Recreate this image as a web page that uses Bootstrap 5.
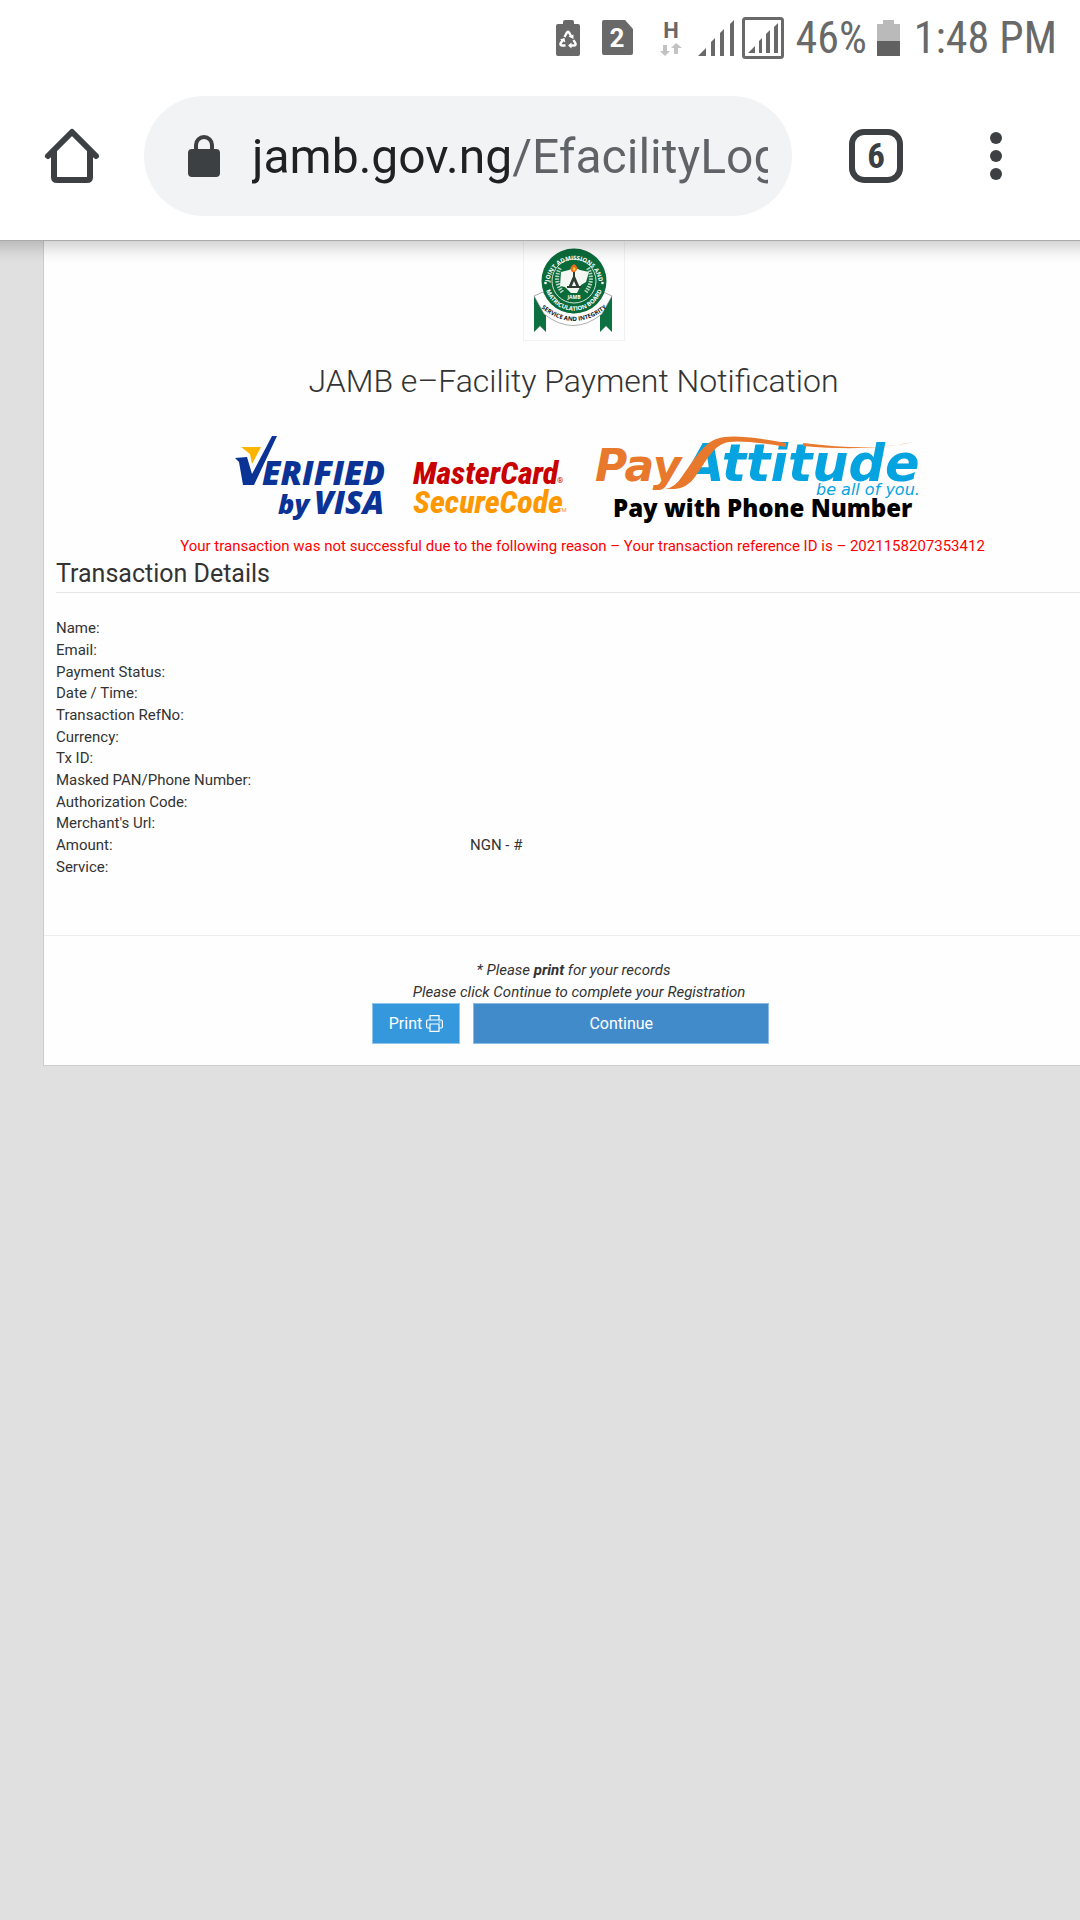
<!DOCTYPE html>
<html lang="en">
<head>
<meta charset="utf-8">
<meta name="viewport" content="width=device-width, initial-scale=1">
<title>JAMB e-Facility Payment Notification</title>
<link href="https://cdn.jsdelivr.net/npm/bootstrap@5.3.0/dist/css/bootstrap.min.css" rel="stylesheet">
<style>
body { font-family: Roboto, "Liberation Sans", sans-serif; background: #e0e0e0; color: #333; font-size: 15px; line-height: 21px; overflow-x: hidden; }
svg { display: block; flex: none; overflow: visible; }
.phone-status { height: 76px; padding-right: 23px; color: #696969; font-family: "Roboto Condensed", Roboto, sans-serif; font-size: 44px; line-height: 76px; }
.sim-gap { margin: 0 27px 0 22px; }
.level-gap { margin: 0 14px 0 10px; }
.toolbar { padding: 20px 78px 24px 45px; border-bottom: 1px solid #aaacac; }
.toolbar .btn { --bs-btn-padding-x: 0; --bs-btn-padding-y: 0; --bs-btn-border-width: 0; color: #3c4043; flex: none; }
.toolbar .menu-btn { margin-left: 87px; }
.address { flex: 1 1 0; min-width: 0; height: 120px; margin: 0 57px 0 45px; padding: 0 24px 0 44px; background: #f1f3f4; }
.address input { flex: 1 1 0; min-width: 0; margin-left: 32px; padding: 0; border: 0; outline: 0; font-size: 48px; line-height: 60px; height: 64px; color: #202124; -webkit-text-fill-color: transparent; background: linear-gradient(90deg, #202124 258px, #5f6368 258px); -webkit-background-clip: text; background-clip: text; }
.toolbar-shadow { height: 22px; top: 0; background: linear-gradient(rgba(0,0,0,.16), rgba(0,0,0,.04) 60%, rgba(0,0,0,0)); }
.sheet { margin-left: 43px; margin-right: -24px; background: #fefefe; border: 1px solid #ccc; border-top: 0; }
.sheet-main { padding: 0 12px 57px; }
.seal { width: 102px; padding-top: 1px; border: 1px solid #f1f1f1; border-top: 0; }
.page-title { font-weight: 300; font-size: 32px; line-height: 38px; margin: 21px 0 31px; color: #333; }
.fail-note { color: #f00; padding-left: 18px; margin-top: 3px; }
.section-title { font-size: 25px; line-height: 28px; font-weight: 400; margin: 3px 0 25px; padding-bottom: 4px; border-bottom: 1px solid #e5e5e5; }
.details { height: 260px; width: 100%; line-height: 21px; }
.details th { width: 40%; font-weight: 400; padding: 0; }
.details td { padding: 0; }
.sheet-foot { border-top: 1px solid #eee; padding: 23px 0 21px; line-height: 22px; }
.actions { gap: 13px; padding-right: 6px; }
.actions .btn { height: 41px; border-radius: 0; font-size: 16px; line-height: 22px; color: #fff; padding: 0 16px; font-weight: 400; }
.btn-print { background: #3598dc; border: 1px solid #8fc4ec; }
.actions .btn-continue { background: #428bca; border: 1px solid #8cbce4; width: 296px; }
</style>
</head>
<body>
<header class="bg-white">
  <div class="phone-status d-flex align-items-center justify-content-end">
    <svg width="24" height="36" viewBox="0 0 24 36"><path fill="#696969" d="M2 4h5V2q0-2 2-2h7q2 0 2 2v2h4q2 0 2 2v28q0 2-2 2H2q-2 0-2-2V6q0-2 2-2z"/><path d="M8.500 17l2.500-4.500q1-1.500 2 0l2 3.500M17.500 20l2 3.500q.5 2-1.500 2h-3.500M9.500 25.500H6q-2-.2-1.500-2L7 19.500" fill="none" stroke="#fff" stroke-width="2.400"/><path fill="#fff" d="M12.500 16.500l5-2v4.500zM15.500 22.500v6l-3.500-3zM4 19.500l4.500-1.500.8 4.500z"/></svg>
    <svg class="sim-gap" width="31" height="36" viewBox="0 0 31 36"><path fill="#696969" d="M2 0h21l8 9v24q0 2-2 2H2q-2 0-2-2V2q0-2 2-2z"/><text x="15" y="27" text-anchor="middle" font-family="Roboto" font-weight="700" font-size="26" fill="#fff">2</text></svg>
    <svg width="22" height="36" viewBox="0 0 22 36"><text x="11" y="18" text-anchor="middle" font-family="Roboto" font-weight="700" font-size="22" fill="#696969">H</text><path fill="#c2c2c2" d="M3 25h4v6h3l-5 5-5-5h3zM14 34h4v-6h4l-6-5-5 5h3z"/></svg>
    <svg class="ms-3" width="36" height="36" viewBox="0 0 36 36" fill="#696969"><path d="M0 36l8-8v8zM13 36V22l4-4v18zM22 36V13l4-4v27zM32 36V4l4-4v36z"/></svg>
    <svg class="ms-2" width="42" height="42" viewBox="0 0 42 42" fill="#696969"><rect x="1.500" y="1.500" width="39" height="39" rx="2" fill="none" stroke="#696969" stroke-width="3"/><path d="M6 36l7-7v7zM17 36V24l3-3v15zM24 36V17l4-4v23zM32 36V10l4-4v30z"/></svg>
    <span class="ps-2 ms-1">46%</span>
    <svg class="level-gap" width="23" height="36" viewBox="0 0 23 36"><path fill="#bababa" d="M0 4h6V0h11v4h6v17H0z"/><path fill="#616161" d="M0 21h23v15H0z"/></svg>
    <span>1:48 PM</span>
  </div>
  <div class="toolbar d-flex align-items-center">
    <button class="btn" type="button" aria-label="Home"><svg width="54" height="54" viewBox="0 0 54 54" fill="none" stroke="#3c4043" stroke-width="6" stroke-linejoin="round" stroke-linecap="round"><path d="M3 27L27 3l24 24M9 22v26q0 3 3 3h30q3 0 3-3V22"/></svg></button>
    <div class="address d-flex align-items-center rounded-pill">
      <svg width="32" height="42" viewBox="0 0 32 42"><rect y="14" width="32" height="28" rx="4" fill="#3c4043"/><path d="M8 16V10a8 8 0 0 1 16 0v6" fill="none" stroke="#3c4043" stroke-width="4"/></svg>
      <input type="text" aria-label="Address" value="jamb.gov.ng/EfacilityLogin">
    </div>
    <button class="btn" type="button" aria-label="Tabs"><svg width="54" height="54" viewBox="0 0 54 54"><rect x="3" y="3" width="48" height="48" rx="12" fill="none" stroke="#3c4043" stroke-width="6"/><text x="27" y="39" text-anchor="middle" font-family="'Roboto Condensed', Roboto" font-weight="700" font-size="35" fill="#3c4043">6</text></svg></button>
    <button class="btn menu-btn" type="button" aria-label="Menu"><svg width="12" height="54" viewBox="0 0 12 54" fill="#3c4043"><circle cx="6" cy="9" r="6"/><circle cx="6" cy="27" r="6"/><circle cx="6" cy="45" r="6"/></svg></button>
  </div>
</header>

<div class="position-relative overflow-hidden">
  <div class="toolbar-shadow position-absolute start-0 w-100"></div>
  <main class="sheet">
    <div class="sheet-main">
      <div class="seal mx-auto">
        <svg width="100" height="98" viewBox="0 0 100 98">
          <defs><path id="arcTop" d="M25 43a25 25 0 1 1 50 0"/><path id="arcLow" d="M21 36a29.200 29.200 0 1 0 58 0"/><path id="arcBand" d="M16 65Q50 93 84 65"/></defs>
          <path d="M10 54v36l6-6 6 6V62zM88 54v36l-6-6-6 6V62z" fill="#0d7040"/>
          <path d="M10 54l9-4q30 42 60 0l9 4-10 18q-29 23-58 0z" fill="#fff" stroke="#777" stroke-width=".6"/>
          <circle cx="50" cy="39" r="32.500" fill="#0a6b3a"/><circle cx="50" cy="39" r="22" fill="none" stroke="#cfe4d8"/>
          <path d="M37 30l8-2 5-3 6 3 9 2-3 10-5 3-4 8h-6l-6-6-5-1z" fill="#f4f8f4"/>
          <path d="M44 46l6-14 6 14h-3l-3-7-3 7zM43 44h14v2H43zM49 28h2v8h-2z" fill="#2d3d34"/>
          <path d="M50 22q6 4 1 8h-3q-4-4 2-8z" fill="#f26b1d"/><path d="M50 25q3 2 0 4-2-2 0-4z" fill="#ffd83a"/>
          <path d="M36 26q-7 13 3 25M64 26q7 13-3 25" fill="none" stroke="#b8d6c5" stroke-width="4" stroke-dasharray="1.500 1.200"/>
          <g font-family="Open Sans" font-weight="700" text-anchor="middle" fill="#fff"><text font-size="6"><textPath href="#arcTop" startOffset="50%">JOINT ADMISSIONS AND</textPath></text><text font-size="6"><textPath href="#arcLow" startOffset="50%">MATRICULATION BOARD</textPath></text><text x="50" y="57" font-size="5">JAMB</text></g>
          <text font-family="Open Sans" font-weight="700" font-size="6" text-anchor="middle" fill="#111"><textPath href="#arcBand" startOffset="50%">SERVICE AND INTEGRITY</textPath></text>
          <circle cx="21.500" cy="41" r="1.300" fill="#fff"/><circle cx="78.500" cy="41" r="1.300" fill="#fff"/>
        </svg>
      </div>
      <h1 class="page-title text-center">JAMB e–Facility Payment Notification</h1>

      <div class="d-flex justify-content-center ps-1">
        <svg width="178" height="102" viewBox="0 0 178 102" role="img" aria-label="Verified by Visa">
          <g font-family="Open Sans" font-weight="800" font-style="italic" fill="#0b3396"><text x="35" y="54" font-size="33">ERIFIED</text><text x="51" y="83" font-size="27">by</text><text x="87" y="83" font-size="32">VISA</text></g>
          <path d="M8 27l12-1 5 17L45 5h5L27 54H16L12 31z" fill="#0b3396"/><path d="M14 16h20L25 33l-2-10z" fill="#fdb400"/>
        </svg>
        <svg width="188" height="102" viewBox="0 0 188 102" role="img" aria-label="MasterCard SecureCode">
          <g font-family="'Roboto Condensed', 'Open Sans'" font-weight="800" font-style="italic" font-size="32"><text x="8" y="53" fill="#c80000">MasterCard</text><text x="8" y="82" fill="#ff9800">SecureCode</text></g>
          <g font-family="Roboto"><text x="152" y="52" font-size="8" fill="#c80000">®</text><text x="153" y="81" font-size="6" fill="#ff9800">TM</text></g>
        </svg>
        <svg width="332" height="102" viewBox="0 0 332 102" role="img" aria-label="PayAttitude, Pay with Phone Number">
          <g font-family="DejaVu Sans" font-weight="700" font-style="italic"><text x="2" y="50" font-size="44" fill="#e8792c">Pay</text><text x="92" y="50" font-size="51" fill="#05a3df">Attitude</text></g>
          <path d="M72 58Q82 57 90 44C104 25 112 8 132 6q19-2 61 6v4q-40-7-57-5c-15 2-22 18-34 35q-8 11-20 12z" fill="#e8792c"/>
          <path d="M210 12q72 9 110-1-45 10-110 4z" fill="#e8792c"/>
          <text x="223" y="64" font-family="DejaVu Sans" font-style="italic" font-size="16" fill="#05a3df">be all of you.</text>
          <text x="20" y="86" font-family="Open Sans" font-weight="800" font-size="24" fill="#000">Pay with Phone Number</text>
        </svg>
      </div>

      <p class="fail-note text-center mb-0">Your transaction was not successful due to the following reason – Your transaction reference ID is – 2021158207353412</p>
      <h2 class="section-title">Transaction Details</h2>
      <table class="details">
        <tbody>
          <tr><th scope="row">Name:</th><td></td></tr>
          <tr><th scope="row">Email:</th><td></td></tr>
          <tr><th scope="row">Payment Status:</th><td></td></tr>
          <tr><th scope="row">Date / Time:</th><td></td></tr>
          <tr><th scope="row">Transaction RefNo:</th><td></td></tr>
          <tr><th scope="row">Currency:</th><td></td></tr>
          <tr><th scope="row">Tx ID:</th><td></td></tr>
          <tr><th scope="row">Masked PAN/Phone Number:</th><td></td></tr>
          <tr><th scope="row">Authorization Code:</th><td></td></tr>
          <tr><th scope="row">Merchant's Url:</th><td></td></tr>
          <tr><th scope="row">Amount:</th><td>NGN - #</td></tr>
          <tr><th scope="row">Service:</th><td></td></tr>
        </tbody>
      </table>
    </div>
    <div class="sheet-foot text-center">
      <p class="mb-0 fst-italic">* Please <strong>print</strong> for your records<br>&nbsp;&nbsp;&nbsp;Please click Continue to complete your Registration</p>
      <div class="actions d-flex justify-content-center">
        <button type="button" class="btn btn-print d-flex align-items-center justify-content-center">Print
          <svg class="ms-1" width="17" height="17" viewBox="0 0 17 17" fill="none" stroke="#fff" stroke-width="1.200"><path d="M4 5V.6h9V5M4 13H1.800q-1.200 0-1.200-1.200V6.200Q.6 5 1.800 5h13.400q1.200 0 1.200 1.200v5.600q0 1.200-1.200 1.200H13M4 9h9v7.400H4zM12.500 7h2"/></svg>
        </button>
        <button type="button" class="btn btn-continue">Continue</button>
      </div>
    </div>
  </main>
</div>
<script src="https://cdn.jsdelivr.net/npm/bootstrap@5.3.0/dist/js/bootstrap.bundle.min.js"></script>
</body>
</html>
